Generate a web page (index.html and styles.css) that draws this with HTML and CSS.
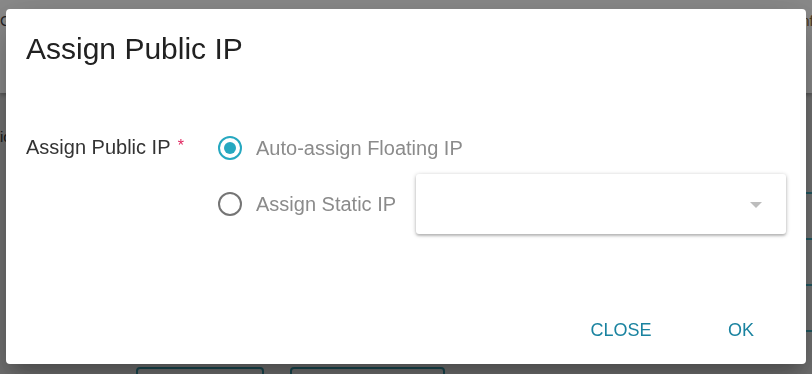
FILE: index.html
```html
<!DOCTYPE html>
<html lang="en">
<head>
    <meta charset="UTF-8">
    <meta name="viewport" content="width=device-width, initial-scale=1.0">
    <title>Assign Public IP</title>
    <link rel="stylesheet" href="styles.css">
</head>
<body>
    <div class="page">
        <header class="page-header">
            <span class="page-title">Gateway</span>
            <span class="page-info">Info</span>
        </header>
        <div class="page-content">
            <div class="page-label">Network options</div>
            <div class="page-table">
                <div class="page-row"></div>
                <div class="page-row"></div>
                <div class="page-row"></div>
            </div>
            <div class="page-actions">
                <span class="page-btn page-btn-a"></span>
                <span class="page-btn page-btn-b"></span>
            </div>
        </div>
    </div>

    <div class="overlay"></div>

    <div class="dialog">
        <h1 class="dialog-title">Assign Public IP</h1>

        <div class="dialog-body">
            <div class="field-label">Assign Public IP <span class="required">*</span></div>
            <div class="options">
                <label class="option">
                    <span class="radio checked"></span>
                    <span class="option-text">Auto-assign Floating IP</span>
                </label>
                <label class="option">
                    <span class="radio"></span>
                    <span class="option-text">Assign Static IP</span>
                    <div class="select">
                        <span class="select-arrow"></span>
                    </div>
                </label>
            </div>
        </div>

        <div class="dialog-actions">
            <button class="btn">CLOSE</button>
            <button class="btn">OK</button>
        </div>
    </div>
</body>
</html>
```

FILE: styles.css
```css
:root {
    --teal: #26a8c0;
    --teal-dark: #1a83a0;
    --text: #333;
    --muted: #8b8b8b;
}

* {
    box-sizing: border-box;
    font-family: 'Liberation Sans', Arial, sans-serif;
}

body {
    margin: 0;
    background: #d2d2d2;
    overflow: hidden;
}

/* page behind the dialog */
.page {
    height: 374px;
    overflow: hidden;
}

.page-header {
    height: 93px;
    background: white;
    box-shadow: 0 2px 4px rgba(0,0,0,0.3);
    display: flex;
    justify-content: space-between;
    align-items: flex-start;
    padding: 12px 0 0 0;
    font-size: 15px;
    color: #444;
}

.page-info {
    color: #8a6a3a;
    margin-right: -10px;
}

.page-content {
    padding-top: 35px;
}

.page-label {
    height: 17px;
    font-size: 15px;
    color: #333;
    margin-left: -80px;
}

.page-table {
    margin-top: 47px;
    margin-left: 780px;
    border-bottom: 2px solid #3fa3b4;
}

.page-row {
    height: 46px;
    border-top: 2px solid #3fa3b4;
}

.page-actions {
    display: flex;
    gap: 26px;
    padding-left: 136px;
    margin-top: 35px;
}

.page-btn {
    height: 30px;
    border: 2px solid #2e8796;
    border-radius: 4px;
}

.page-btn-a {
    width: 128px;
}

.page-btn-b {
    width: 155px;
}

.overlay {
    position: fixed;
    inset: 0;
    background: rgba(0,0,0,0.46);
}

/* dialog */
.dialog {
    position: fixed;
    left: 6px;
    top: 9px;
    width: 800px;
    height: 355px;
    background: white;
    border-radius: 4px;
    box-shadow: 0 11px 15px -7px rgba(0,0,0,0.2), 0 24px 38px 3px rgba(0,0,0,0.14), 0 9px 46px 8px rgba(0,0,0,0.12);
    display: flex;
    flex-direction: column;
}

.dialog-title {
    margin: 0;
    padding: 23px 20px 0;
    font-size: 30px;
    line-height: 34px;
    font-weight: normal;
    color: #212121;
}

.dialog-body {
    display: flex;
    padding: 58px 20px 0;
}

.field-label {
    width: 192px;
    padding-top: 10px;
    font-size: 20px;
    line-height: 23px;
    color: var(--text);
}

.required {
    color: #e0245e;
    font-size: 16px;
    vertical-align: 3px;
    margin-left: 2px;
}

.options {
    display: flex;
    flex-direction: column;
    gap: 2px;
}

.option {
    display: flex;
    align-items: center;
    min-height: 48px;
}

.radio {
    width: 24px;
    height: 24px;
    border: 2.5px solid #757575;
    border-radius: 50%;
    display: flex;
    align-items: center;
    justify-content: center;
    flex-shrink: 0;
}

.radio.checked {
    border-color: var(--teal);
}

.radio.checked::after {
    content: "";
    width: 12px;
    height: 12px;
    border-radius: 50%;
    background: var(--teal);
}

.option-text {
    margin-left: 14px;
    font-size: 20px;
    color: var(--muted);
}

.select {
    width: 370px;
    height: 60px;
    margin-left: 20px;
    border-radius: 3px;
    background: white;
    box-shadow: 0 1px 4px rgba(0,0,0,0.28), 0 2px 2px rgba(0,0,0,0.12);
    display: flex;
    align-items: center;
    justify-content: flex-end;
    padding: 0 24px 0 0;
}

.select-arrow {
    width: 0;
    height: 0;
    border-left: 6px solid transparent;
    border-right: 6px solid transparent;
    border-top: 6px solid #bdbdbd;
    margin-top: 2px;
}

.dialog-actions {
    margin-top: auto;
    display: flex;
    justify-content: flex-end;
    gap: 32px;
    padding: 0 21px 16px;
}

.btn {
    min-width: 88px;
    height: 36px;
    border: none;
    background: none;
    color: var(--teal-dark);
    font-size: 18px;
    cursor: pointer;
    padding: 0 8px;
}
```
